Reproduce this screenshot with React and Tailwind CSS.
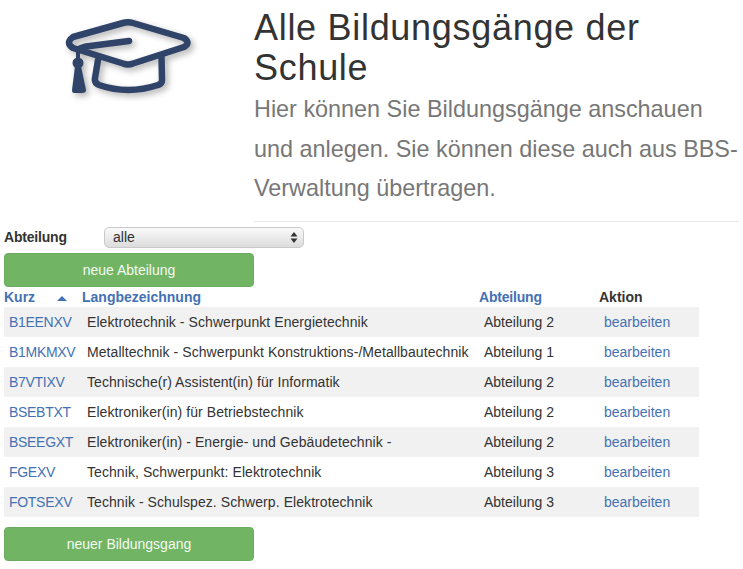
import React from 'react';

const rows = [
  ['B1EENXV', 'Elektrotechnik - Schwerpunkt Energietechnik', 'Abteilung 2'],
  ['B1MKMXV', 'Metalltechnik - Schwerpunkt Konstruktions-/Metallbautechnik', 'Abteilung 1'],
  ['B7VTIXV', 'Technische(r) Assistent(in) für Informatik', 'Abteilung 2'],
  ['BSEBTXT', 'Elektroniker(in) für Betriebstechnik', 'Abteilung 2'],
  ['BSEEGXT', 'Elektroniker(in) - Energie- und Gebäudetechnik -', 'Abteilung 2'],
  ['FGEXV', 'Technik, Schwerpunkt: Elektrotechnik', 'Abteilung 3'],
  ['FOTSEXV', 'Technik - Schulspez. Schwerp. Elektrotechnik', 'Abteilung 3'],
];

const CapIcon = () => (
  <svg width="170" height="110" viewBox="0 0 170 110" className="drop-shadow-[3px_3px_3px_rgba(0,0,0,0.3)]">
    <g fill="none" stroke="#2f4468" strokeWidth="6.5" strokeLinecap="round" strokeLinejoin="round">
      <path d="M33 37 L83 23 Q88 21.5 93 23 L144 38 Q151 43 144 47 L93 63.5 Q88 65.5 83 63.5 L33 48 Q25 43 33 37 Z" />
      <path d="M38 50 Q40 48 46 46.5 L89 41" />
      <path d="M58 60 L55 78 Q54 83 59 85 Q88 95 118 85 Q122 84 122 80 L121.5 57" />
    </g>
    <circle cx="38" cy="63" r="5.5" fill="#2f4468" />
    <path d="M38 50 L38 60" stroke="#2f4468" strokeWidth="4" />
    <path d="M35 66 H41 L46 90 Q46 93 42 93 H34 Q32 93 32 90 Z" fill="#2f4468" />
  </svg>
);

const GreenButton = ({ children }) => (
  <button className="block h-[34px] w-[250px] rounded-[4px] border border-[#6aad5f] bg-[#71b564] pt-[2px] text-center text-[14px] text-[#f4f9f2]">
    {children}
  </button>
);

const App = () => {
  return (
    <div className="min-h-[569px] bg-white font-['Liberation_Sans',Arial,sans-serif] text-[#333]">
      <div className="flex">
        <div className="w-[254px] shrink-0 pl-[40px]">
          <CapIcon />
        </div>
        <div className="mr-[4px] flex-1 border-b border-[#e8e8e8] pt-[8px] pb-[12px]">
          <h1 className="text-[36px] leading-[39.6px] tracking-[0.7px] font-medium text-[#333]">Alle Bildungsgänge der Schule</h1>
          <p className="mt-[3px] text-[23.4px] leading-[39.6px] font-light text-[#777]">
            Hier können Sie Bildungsgänge anschauen und anlegen. Sie können diese auch aus BBS-Verwaltung übertragen.
          </p>
        </div>
      </div>

      <div className="pl-[4px]">
        <div className="mt-[5px] flex h-[21px] items-center">
          <label className="w-[100px] text-[14px] tracking-[-0.2px] font-bold">Abteilung</label>
          <div className="flex h-[21px] w-[200px] items-center justify-between rounded-[5px] border border-[#c9c9c9] bg-gradient-to-b from-[#fafafa] to-[#dcdcdc] pr-[5px] pl-[8px] text-[14px] text-[#333]">
            <span>alle</span>
            <svg width="8" height="13" viewBox="0 0 8 13" fill="#333">
              <path d="M4 1 L7.5 5.5 H0.5 Z" />
              <path d="M4 12 L7.5 7.5 H0.5 Z" />
            </svg>
          </div>
        </div>

        <div className="mt-[5px]">
          <GreenButton>neue Abteilung</GreenButton>
        </div>

        <table className="w-[695px] table-fixed border-collapse text-[14px]">
          <colgroup>
            <col className="w-[78px]" />
            <col className="w-[396px]" />
            <col className="w-[121px]" />
            <col className="w-[100px]" />
          </colgroup>
          <thead>
            <tr className="h-[20px] text-left text-[14px] leading-[20px] font-bold text-[#4471b4]">
              <th className="relative font-bold">
                Kurz
                <span className="absolute top-[9px] left-[53px] h-0 w-0 border-x-[5px] border-b-[5px] border-x-transparent border-b-[#4471b4]" />
              </th>
              <th className="font-bold">Langbezeichnung</th>
              <th className="pl-px tracking-[-0.2px] font-bold">Abteilung</th>
              <th className="font-bold text-[#333]">Aktion</th>
            </tr>
          </thead>
          <tbody>
            {rows.map((row, i) => (
              <tr key={row[0]} className={`h-[30px] ${i % 2 === 0 ? 'bg-[#f1f1f1]' : 'bg-white'}`}>
                <td className="pt-[2px] pl-[5px] tracking-[-0.3px] whitespace-nowrap text-[#4471b4]">{row[0]}</td>
                <td className="pt-[2px] pl-[5px] tracking-[0.07px] whitespace-nowrap">{row[1]}</td>
                <td className="pt-[2px] pl-[6px] whitespace-nowrap">{row[2]}</td>
                <td className="pt-[2px] pl-[5px] whitespace-nowrap text-[#4471b4]">bearbeiten</td>
              </tr>
            ))}
          </tbody>
        </table>

        <div className="mt-[10px]">
          <GreenButton>neuer Bildungsgang</GreenButton>
        </div>
      </div>
    </div>
  );
};

export default App;
